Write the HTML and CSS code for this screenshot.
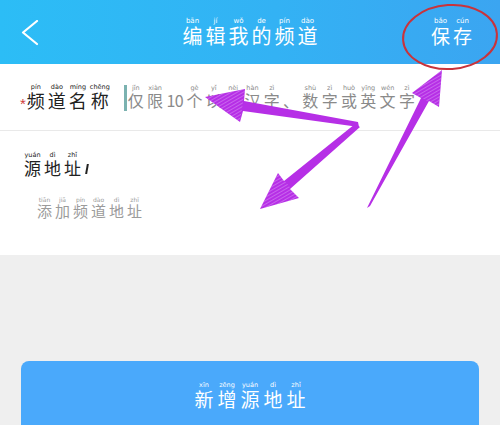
FILE: index.html
```html
<!DOCTYPE html>
<html lang="zh-CN">
<head>
<meta charset="utf-8">
<title>编辑我的频道</title>
<link rel="stylesheet" href="styles.css">
</head>
<body>
<div class="page">
  <header class="topbar">
    <svg class="back" width="20" height="26" viewBox="0 0 20 26"><polyline points="17,1 3,12.5 17,24" fill="none" stroke="#fff" stroke-width="2.2" stroke-linecap="round" stroke-linejoin="round"/></svg>
    <div class="title word">
      <span class="ch"><span class="py">bān</span>编</span>
      <span class="ch"><span class="py">jí</span>辑</span>
      <span class="ch"><span class="py">wǒ</span>我</span>
      <span class="ch"><span class="py">de</span>的</span>
      <span class="ch"><span class="py">pín</span>频</span>
      <span class="ch"><span class="py">dào</span>道</span>
    </div>
    <div class="save word">
      <span class="ch"><span class="py">bǎo</span>保</span>
      <span class="ch"><span class="py">cún</span>存</span>
    </div>
  </header>

  <section class="row-name">
    <span class="star">*</span>
    <div class="label word">
      <span class="ch"><span class="py">pín</span>频</span>
      <span class="ch"><span class="py">dào</span>道</span>
      <span class="ch"><span class="py">míng</span>名</span>
      <span class="ch"><span class="py">chēng</span>称</span>
    </div>
    <span class="caret"></span>
    <div class="hint word">
      <span class="ch"><span class="py">jǐn</span>仅</span>
      <span class="ch"><span class="py">xiàn</span>限</span>
      <span class="ch num"><span class="py">&nbsp;</span>10</span>
      <span class="ch"><span class="py">gè</span>个</span>
      <span class="ch"><span class="py">yǐ</span>以</span>
      <span class="ch"><span class="py">nèi</span>内</span>
      <span class="ch"><span class="py">hàn</span>汉</span>
      <span class="ch"><span class="py">zì</span>字</span>
      <span class="ch"><span class="py">&nbsp;</span>、</span>
      <span class="ch"><span class="py">shù</span>数</span>
      <span class="ch"><span class="py">zì</span>字</span>
      <span class="ch"><span class="py">huò</span>或</span>
      <span class="ch"><span class="py">yīng</span>英</span>
      <span class="ch"><span class="py">wén</span>文</span>
      <span class="ch"><span class="py">zì</span>字</span>
    </div>
  </section>

  <section class="row-source">
    <div class="source-label">
      <div class="label2 word">
        <span class="ch"><span class="py">yuán</span>源</span>
        <span class="ch"><span class="py">dì</span>地</span>
        <span class="ch"><span class="py">zhǐ</span>址</span>
      </div>
      <span class="caret2"></span>
    </div>
    <div class="hint2 word">
      <span class="ch"><span class="py">tiān</span>添</span>
      <span class="ch"><span class="py">jiā</span>加</span>
      <span class="ch"><span class="py">pín</span>频</span>
      <span class="ch"><span class="py">dào</span>道</span>
      <span class="ch"><span class="py">dì</span>地</span>
      <span class="ch"><span class="py">zhǐ</span>址</span>
    </div>
  </section>

  <button class="add-btn" type="button">
    <span class="btn-text word">
      <span class="ch"><span class="py">xīn</span>新</span>
      <span class="ch"><span class="py">zēng</span>增</span>
      <span class="ch"><span class="py">yuán</span>源</span>
      <span class="ch"><span class="py">dì</span>地</span>
      <span class="ch"><span class="py">zhǐ</span>址</span>
    </span>
  </button>

  <svg class="marks" width="500" height="425" viewBox="0 0 500 425">
    <defs>
      <pattern id="hatch" width="3" height="3" patternUnits="userSpaceOnUse" patternTransform="rotate(60)">
        <line x1="0" y1="0" x2="0" y2="3" stroke="#f4d6ff" stroke-width="0.8"/>
      </pattern>
    </defs>
    <ellipse cx="450" cy="37" rx="47" ry="32" fill="none" stroke="#c9333b" stroke-width="2" transform="rotate(-4 450 37)"/>
    <g fill="#b62fe6">
      <polygon points="358,122 244,101 245,89 205,97 240,122 243,111 359,127"/>
      <polygon points="355,124 284,181 278,173 260,209 299,198 290,189 360,127"/>
      <polygon points="367,208 421,98 412,93 442,70 439,107 429,101 370,206"/>
    </g>
    <g fill="url(#hatch)" opacity="0.8">
      <polygon points="245,89 205,97 240,122"/>
      <polygon points="278,173 260,209 299,198"/>
      <polygon points="412,93 442,70 439,107"/>
    </g>
  </svg>
</div>
</body>
</html>
```

FILE: styles.css
```css
* {
  box-sizing: border-box;
}

html, body {
  margin: 0;
  padding: 0;
}

body {
  background: #efefef;
  font-family: "Noto Sans CJK SC", "Noto Sans", sans-serif;
  width: 500px;
  height: 425px;
  overflow: hidden;
}

.page {
  position: relative;
  width: 500px;
  height: 425px;
  overflow: hidden;
}

.word {
  display: flex;
  align-items: flex-end;
}

.ch {
  display: flex;
  flex-direction: column;
  align-items: center;
  line-height: 1;
}

.py {
  display: block;
  font-family: "DejaVu Sans", sans-serif;
  font-size: 6.5px;
  line-height: 8px;
  white-space: nowrap;
}

/* Header */
.topbar {
  height: 64px;
  background: linear-gradient(90deg, #2cbdf6 0%, #33b2f4 55%, #3ba5f1 100%);
  display: flex;
  align-items: flex-start;
  padding: 16px 28px 0 20px;
  color: #fff;
  position: relative;
}

.back {
  display: block;
  margin-top: 4px;
}

.title {
  position: absolute;
  left: 0;
  right: 0;
  top: 17px;
  justify-content: center;
  gap: 3px;
  font-size: 20px;
}

.title .py {
  font-size: 7px;
  line-height: 9px;
}

.save {
  margin-left: auto;
  gap: 3px;
  font-size: 19px;
  padding-top: 1px;
}

.save .py {
  font-size: 7px;
  line-height: 9px;
}

/* Row 1 */
.row-name {
  height: 67px;
  background: #fff;
  border-bottom: 1px solid #e9e9e9;
  display: flex;
  align-items: flex-start;
  padding: 19px 0 0 20px;
  color: #222;
}

.star {
  color: #d03a3a;
  font-family: "Liberation Sans", sans-serif;
  font-size: 15px;
  line-height: 1;
  margin-top: 13px;
  margin-right: 1px;
}

.label {
  gap: 3px;
  font-size: 18px;
}

.caret {
  width: 3px;
  height: 26px;
  background: #7bb2b0;
  margin: 2px 1px 0 14px;
}

.hint {
  gap: 3.3px;
  font-size: 16px;
  color: #8a8a8a;
  margin-top: 1px;
}

.hint .num {
  letter-spacing: -0.5px;
}

/* Row 2 */
.row-source {
  height: 124px;
  background: #fff;
  padding: 20px 0 0 24px;
}

.source-label {
  display: flex;
  align-items: flex-end;
}

.label2 {
  gap: 3px;
  font-size: 17px;
  color: #222;
}

.caret2 {
  width: 1.6px;
  height: 10px;
  background: #222;
  margin: 0 0 2px 5px;
  transform: skewX(-10deg);
}

.hint2 {
  gap: 3px;
  font-size: 15px;
  color: #9b9b9b;
  margin: 20px 0 0 13px;
}

.hint2 .py {
  font-size: 6px;
  line-height: 7px;
}

/* Button */
.add-btn {
  display: flex;
  justify-content: center;
  align-items: flex-start;
  width: 458px;
  height: 80px;
  margin: 106px 0 0 21px;
  padding: 20px 0 0 0;
  border: none;
  border-radius: 8px;
  background: #4aa9fb;
  color: #fff;
  font-family: inherit;
}

.btn-text {
  gap: 4px;
  font-size: 19px;
}

/* Annotation overlay */
.marks {
  position: absolute;
  left: 0;
  top: 0;
  pointer-events: none;
}
```
